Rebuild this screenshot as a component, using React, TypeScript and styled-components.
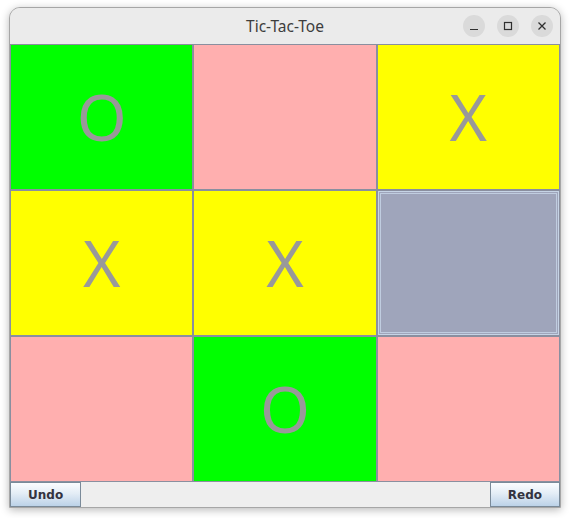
import styled, { createGlobalStyle } from "styled-components";

const GlobalStyle = createGlobalStyle`
  html, body {
    margin: 0;
    padding: 0;
    background: #ffffff;
  }
  body {
    font-family: "Noto Sans", "DejaVu Sans", sans-serif;
  }
`;

const Desktop = styled.div`
  width: 570px;
  height: 518px;
  padding: 7px 0 0 9px;
  box-sizing: border-box;
`;

const Window = styled.div`
  width: 552px;
  height: 501px;
  box-sizing: border-box;
  border: 1px solid #a6a6a6;
  border-radius: 11px 11px 0 0;
  background: #eeeeee;
  box-shadow: 0 2px 9px rgba(0, 0, 0, 0.28);
  display: flex;
  flex-direction: column;
  overflow: hidden;
`;

const TitleBar = styled.div`
  height: 36px;
  flex: none;
  background: #ebebeb;
  position: relative;
  display: flex;
  align-items: center;
  justify-content: center;
`;

const Title = styled.div`
  font-family: "Noto Sans", sans-serif;
  font-size: 15.5px;
  color: #3d3d3d;
`;

const Controls = styled.div`
  position: absolute;
  right: 7px;
  top: 7px;
  display: flex;
  gap: 12px;
`;

const ControlButton = styled.div`
  width: 22px;
  height: 22px;
  border-radius: 50%;
  background: #dadada;
  display: flex;
  align-items: center;
  justify-content: center;
  color: #2f2f2f;
`;

const Board = styled.div`
  flex: 1;
  display: grid;
  grid-template-columns: repeat(3, 1fr);
  grid-template-rows: repeat(3, 1fr);
`;

type Mark = "X" | "O" | "";

const Cell = styled.div<{ $bg: string; $selected?: boolean }>`
  border: 1px solid #8a8f9f;
  background: ${({ $bg }) => $bg};
  box-shadow: ${({ $selected }) =>
    $selected
      ? "inset 0 0 0 1px #c6d4e6, inset 0 0 0 2px #9fa5bb, inset 0 0 0 3px #c0cde0"
      : "none"};
  display: flex;
  align-items: center;
  justify-content: center;
  font-family: "Noto Sans", sans-serif;
  font-size: 64px;
  font-weight: 400;
  color: #999999;
  line-height: 1;
`;

const BottomBar = styled.div`
  height: 25px;
  flex: none;
  display: flex;
  justify-content: space-between;
  background: #eeeeee;
`;

const ActionButton = styled.button`
  height: 25px;
  padding: 0 17px;
  border: 1px solid #7a8a99;
  background: linear-gradient(to bottom, #fbfdff 0%, #e4edf6 45%, #bcd2e8 100%);
  font-family: "DejaVu Sans", sans-serif;
  font-weight: bold;
  font-size: 12px;
  color: #333340;
  cursor: pointer;
`;

const colors: Record<string, string> = {
  green: "#00ff00",
  pink: "#ffafaf",
  yellow: "#ffff00",
  gray: "#9fa5bb",
};

const cells: { mark: Mark; color: string; selected?: boolean }[] = [
  { mark: "O", color: "green" },
  { mark: "", color: "pink" },
  { mark: "X", color: "yellow" },
  { mark: "X", color: "yellow" },
  { mark: "X", color: "yellow" },
  { mark: "", color: "gray", selected: true },
  { mark: "", color: "pink" },
  { mark: "O", color: "green" },
  { mark: "", color: "pink" },
];

export default function App() {
  return (
    <>
      <GlobalStyle />
      <Desktop>
        <Window>
          <TitleBar>
            <Title>Tic-Tac-Toe</Title>
            <Controls>
              <ControlButton>
                <svg width="10" height="10" viewBox="0 0 10 10">
                  <line x1="1" y1="8.5" x2="9" y2="8.5" stroke="currentColor" strokeWidth="1.2" />
                </svg>
              </ControlButton>
              <ControlButton>
                <svg width="10" height="10" viewBox="0 0 10 10">
                  <rect x="1.5" y="1.5" width="7" height="7" fill="none" stroke="currentColor" strokeWidth="1.2" />
                </svg>
              </ControlButton>
              <ControlButton>
                <svg width="10" height="10" viewBox="0 0 10 10">
                  <path d="M1.5 1.5 L8.5 8.5 M8.5 1.5 L1.5 8.5" stroke="currentColor" strokeWidth="1.3" />
                </svg>
              </ControlButton>
            </Controls>
          </TitleBar>
          <Board>
            {cells.map((c, i) => (
              <Cell key={i} $bg={colors[c.color]} $selected={c.selected}>
                {c.mark}
              </Cell>
            ))}
          </Board>
          <BottomBar>
            <ActionButton>Undo</ActionButton>
            <ActionButton>Redo</ActionButton>
          </BottomBar>
        </Window>
      </Desktop>
    </>
  );
}
